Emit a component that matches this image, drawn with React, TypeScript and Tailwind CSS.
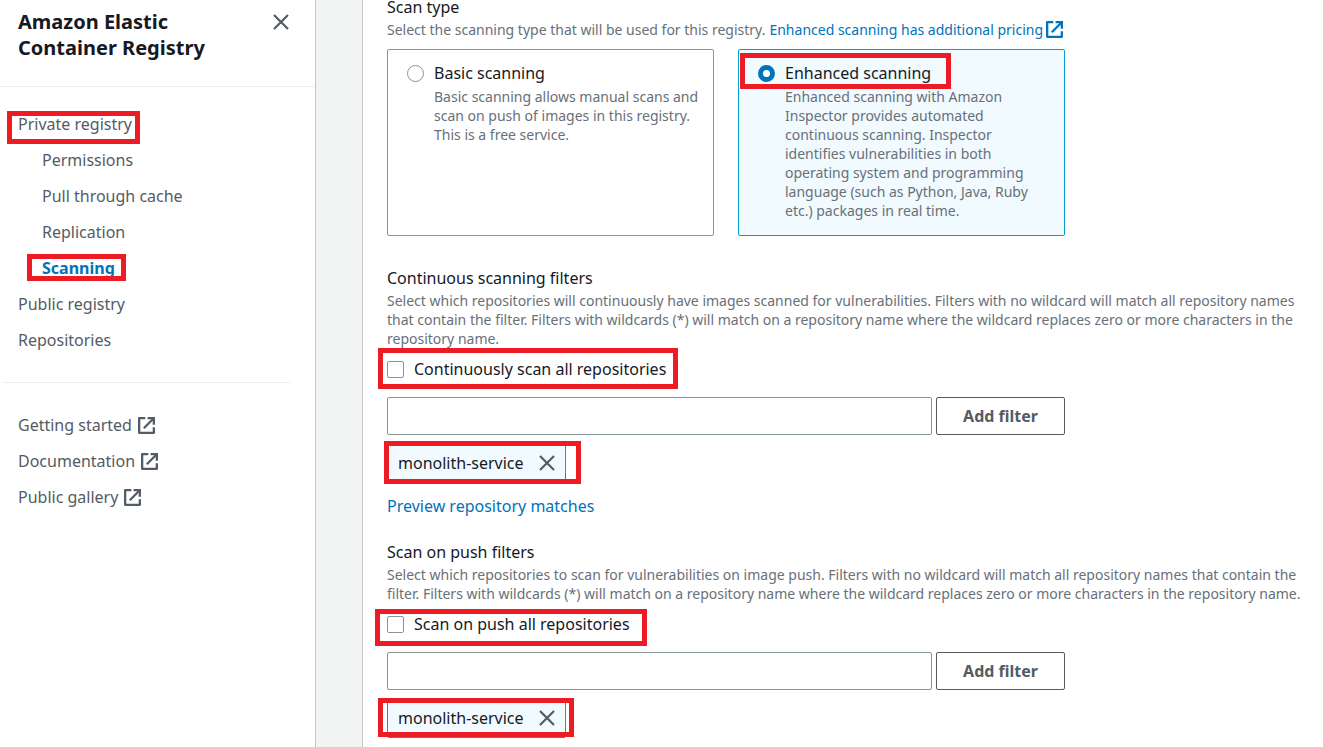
import { useState } from "react";
import type { ReactNode } from "react";

function ExternalIcon() {
  return (
    <svg viewBox="0 0 17 17" className="size-[17px] shrink-0" fill="none" stroke="currentColor" strokeWidth="2.3" aria-hidden="true">
      <path d="M7.3 1.15H1.15v14.7h14.7V10.2" strokeLinejoin="round" />
      <path d="M9.6 1.15h6.25v6.5" />
      <path d="M5.8 11.2l9.7-9.7" />
    </svg>
  );
}

function CloseIcon() {
  return (
    <svg viewBox="0 0 16 16" className="size-4" fill="none" stroke="currentColor" strokeWidth="2.2" aria-hidden="true">
      <path d="M1 1l14 14M15 1L1 15" />
    </svg>
  );
}

function Highlight({ className }: { className: string }) {
  return <span aria-hidden="true" className={"pointer-events-none absolute border-[5px] border-[#ed1c24] " + className} />;
}

function NavLink({ children, nested, active }: { children: ReactNode; nested?: boolean; active?: boolean }) {
  return (
    <li className={nested ? "flex h-9 items-center pl-6" : "flex h-9 items-center"}>
      <a
        href="#"
        aria-current={active ? "page" : undefined}
        className={
          active
            ? "relative flex items-center gap-[6px] font-bold text-[#0073bb]"
            : "relative flex items-center gap-[6px] text-[#545b64]"
        }
      >
        {children}
      </a>
    </li>
  );
}

function ScanCard(props: {
  id: string;
  title: string;
  description: string;
  checked: boolean;
  onSelect: () => void;
  children?: ReactNode;
}) {
  return (
    <label
      htmlFor={props.id}
      className={
        props.checked
          ? "relative flex flex-1 gap-[10px] rounded-[2px] border border-[#00a1c9] bg-[#f1faff] pt-[13px] pr-[11px] pb-[15px] pl-[19px]"
          : "relative flex flex-1 gap-[10px] rounded-[2px] border border-[#879596] bg-white pt-[13px] pr-[11px] pb-[15px] pl-[19px]"
      }
    >
      <input
        id={props.id}
        type="radio"
        name="scan-type"
        checked={props.checked}
        onChange={props.onSelect}
        className="mt-[2px] size-[17px] shrink-0 appearance-none rounded-full border border-[#879596] bg-white checked:border-[5px] checked:border-[#0073bb]"
      />
      <span className="flex flex-col gap-1">
        <span className="leading-5">{props.title}</span>
        <span className="text-[14px] leading-[19px] text-[#687078]">{props.description}</span>
      </span>
      {props.children}
    </label>
  );
}

function FilterGroup(props: {
  id: string;
  title: string;
  description: string;
  checkboxLabel: string;
  checkboxMark: string;
  chipMark: string;
}) {
  return (
    <>
      <h2 className="leading-[18px]">{props.title}</h2>
      <p className="mt-1 text-[14px] leading-[19px] text-[#687078]">{props.description}</p>
      <div className="relative mt-[11px] flex h-5 w-fit items-center gap-[10px]">
        <input
          id={props.id + "-all"}
          type="checkbox"
          className="size-[17px] appearance-none rounded-[2px] border border-[#879596] bg-white checked:bg-[#0073bb]"
        />
        <label htmlFor={props.id + "-all"}>{props.checkboxLabel}</label>
        <Highlight className={props.checkboxMark} />
      </div>
      <div className="mt-[18px] flex max-w-[678px] gap-1">
        <input
          type="text"
          aria-label={props.title}
          className="h-[38px] min-w-0 flex-1 rounded-[2px] border border-[#879596] bg-white px-[10px]"
        />
        <button type="button" className="h-[38px] w-[129px] rounded-[2px] border border-[#545b64] bg-white font-bold text-[#545b64]">
          Add filter
        </button>
      </div>
      <div className="relative mt-2 flex h-10 w-[179px] items-center justify-between rounded-[2px] border border-[#00a1c9] bg-[#f1faff] px-[10px]">
        <span>monolith-service</span>
        <button type="button" aria-label="Remove monolith-service" className="text-[#545b64]">
          <CloseIcon />
        </button>
        <Highlight className={props.chipMark} />
      </div>
    </>
  );
}

export default function App() {
  const [scanType, setScanType] = useState("enhanced");
  return (
    <div className="flex min-h-screen bg-[#f2f3f3] font-['Noto_Sans',sans-serif] text-[16px] leading-5 text-[#16191f]">
      <aside className="w-[316px] shrink-0 border-r border-[#c3c5c7] bg-white">
        <header className="flex justify-between border-b border-[#eaeded] pt-[9px] pr-[26px] pb-[25px] pl-[18px]">
          <h1 className="w-[200px] text-[20px] leading-[26px] font-bold">Amazon Elastic Container Registry</h1>
          <button type="button" aria-label="Close navigation" className="mt-[5px] self-start text-[#545b64]">
            <CloseIcon />
          </button>
        </header>
        <nav aria-label="Registry">
          <ul className="mt-[19px] pl-[18px]">
            <NavLink>
              Private registry
              <Highlight className="-top-[3px] -left-[11px] h-[33px] w-[133px]" />
            </NavLink>
            <NavLink nested>Permissions</NavLink>
            <NavLink nested>Pull through cache</NavLink>
            <NavLink nested>Replication</NavLink>
            <NavLink nested active>
              Scanning
              <Highlight className="-top-1 -left-[15px] h-[27px] w-[99px]" />
            </NavLink>
            <NavLink>Public registry</NavLink>
            <NavLink>Repositories</NavLink>
          </ul>
          <hr className="mt-6 mr-6 ml-[3px] border-[#eaeded]" />
          <ul className="mt-6 pl-[18px]">
            <NavLink>
              Getting started <ExternalIcon />
            </NavLink>
            <NavLink>
              Documentation <ExternalIcon />
            </NavLink>
            <NavLink>
              Public gallery <ExternalIcon />
            </NavLink>
          </ul>
        </nav>
      </aside>
      <main className="ml-[46px] min-w-0 flex-1 border-l border-[#c3c5c7] bg-white pr-4 pl-6">
        <h2 className="-mt-[2px] leading-[18px]">Scan type</h2>
        <p className="mt-1 flex items-center text-[14px] leading-[19px] text-[#687078]">
          Select the scanning type that will be used for this registry.
          <a href="#" className="ml-1 flex items-center gap-[3px] text-[#0073bb]">
            Enhanced scanning has additional pricing <ExternalIcon />
          </a>
        </p>
        <div className="mt-[10px] mb-[33px] flex max-w-[678px] gap-6">
          <ScanCard
            id="basic"
            title="Basic scanning"
            description="Basic scanning allows manual scans and scan on push of images in this registry. This is a free service."
            checked={scanType === "basic"}
            onSelect={() => setScanType("basic")}
          />
          <ScanCard
            id="enhanced"
            title="Enhanced scanning"
            description="Enhanced scanning with Amazon Inspector provides automated continuous scanning. Inspector identifies vulnerabilities in both operating system and programming language (such as Python, Java, Ruby etc.) packages in real time."
            checked={scanType === "enhanced"}
            onSelect={() => setScanType("enhanced")}
          >
            <Highlight className="top-[3px] left-[1px] h-9 w-[211px]" />
          </ScanCard>
        </div>
        <FilterGroup
          id="continuous"
          title="Continuous scanning filters"
          description="Select which repositories will continuously have images scanned for vulnerabilities. Filters with no wildcard will match all repository names that contain the filter. Filters with wildcards (*) will match on a repository name where the wildcard replaces zero or more characters in the repository name."
          checkboxLabel="Continuously scan all repositories"
          checkboxMark="-top-[11px] -left-[9px] h-[41px] w-[300px]"
          chipMark="-top-[3px] -left-1 h-[43px] w-[197px]"
        />
        <a href="#" className="mt-[13px] mb-[27px] block w-fit text-[#0073bb]">
          Preview repository matches
        </a>
        <FilterGroup
          id="push"
          title="Scan on push filters"
          description="Select which repositories to scan for vulnerabilities on image push. Filters with no wildcard will match all repository names that contain the filter. Filters with wildcards (*) will match on a repository name where the wildcard replaces zero or more characters in the repository name."
          checkboxLabel="Scan on push all repositories"
          checkboxMark="-top-[5px] -left-3 h-[37px] w-[272px]"
          chipMark="-top-[1px] -left-[10px] h-[39px] w-[196px]"
        />
      </main>
    </div>
  );
}
